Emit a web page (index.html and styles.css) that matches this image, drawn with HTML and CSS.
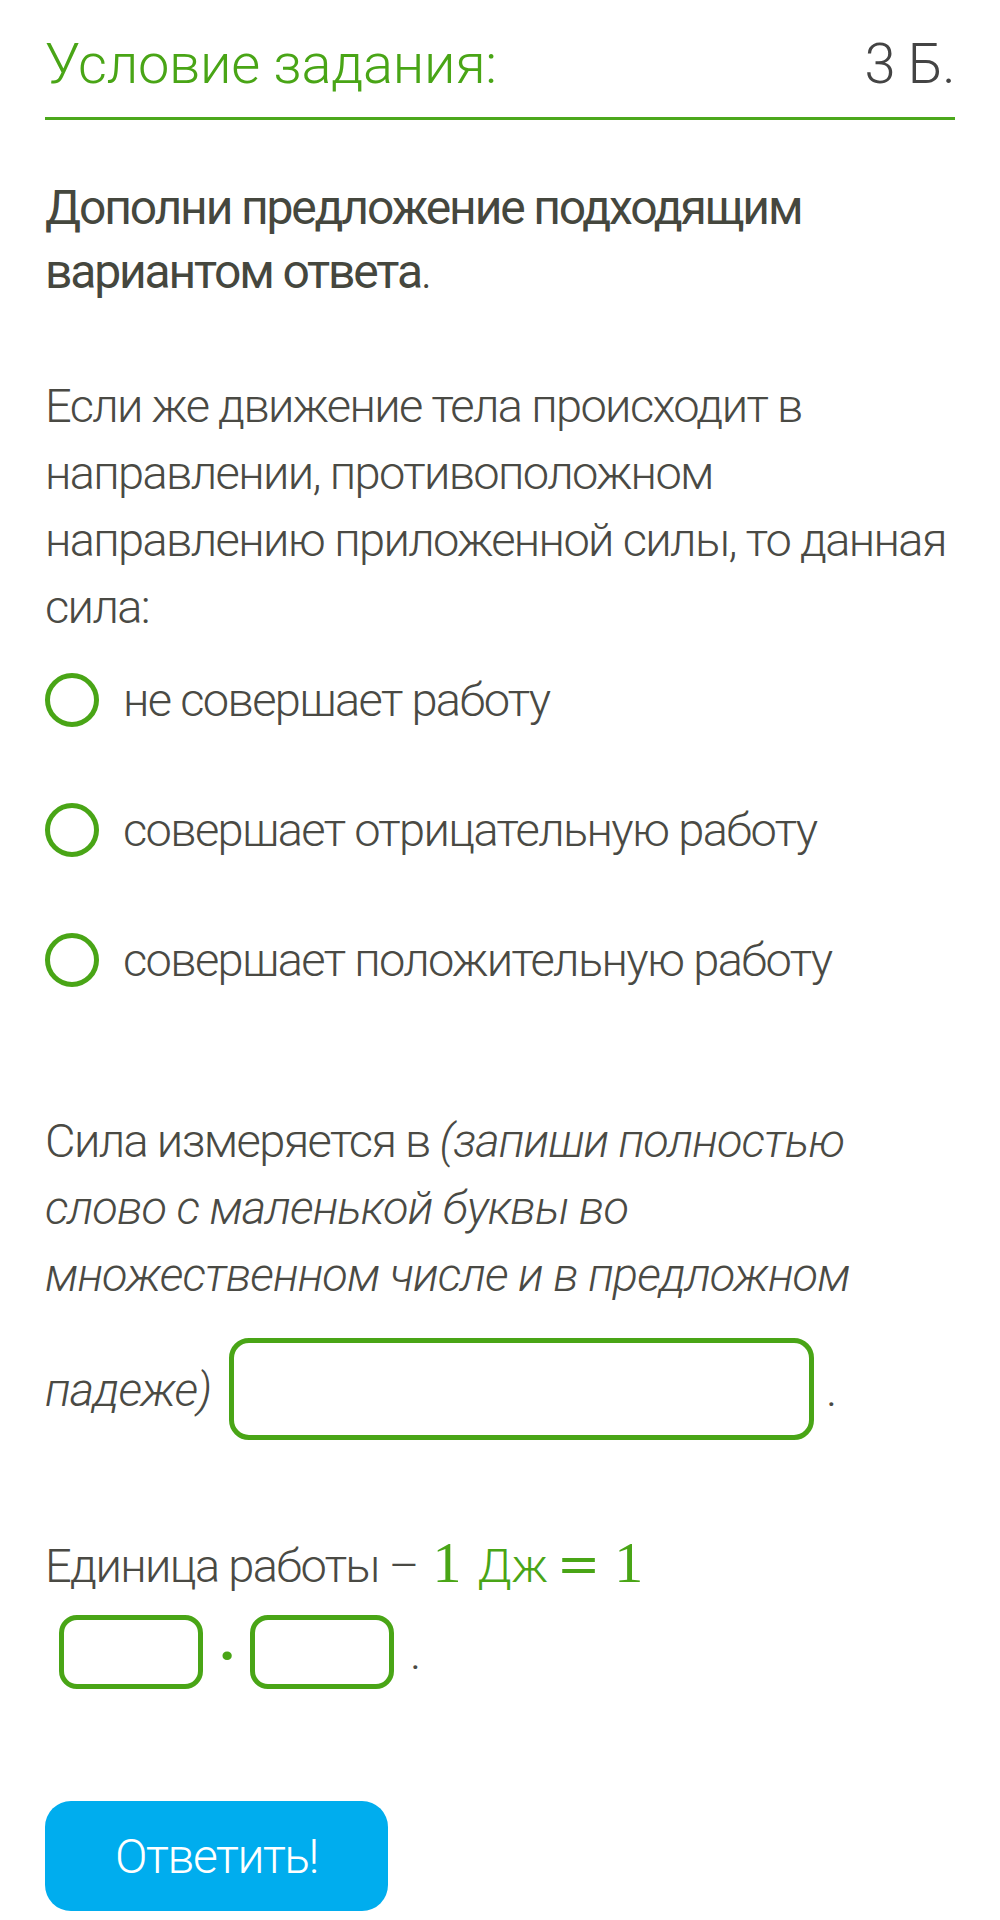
FILE: index.html
```html
<!DOCTYPE html>
<html lang="ru">
<head>
  <meta charset="UTF-8">
  <meta name="viewport" content="width=device-width, initial-scale=1.0">
  <title>Условие задания</title>
  <link rel="stylesheet" href="styles.css">
</head>
<body>
  <div class="task">
    <div class="task-head">
      <h2 class="task-title">Условие задания:</h2>
      <span class="task-points">3 Б.</span>
    </div>

    <p class="task-lead"><b>Дополни предложение подходящим вариантом ответа</b>.</p>

    <p class="task-text">Если же движение тела происходит в направлении, противоположном направлению приложенной силы, то данная сила:</p>

    <div class="options">
      <label class="option"><input type="radio" name="q1"> не совершает работу</label>
      <label class="option"><input type="radio" name="q1"> совершает отрицательную работу</label>
      <label class="option"><input type="radio" name="q1"> совершает положительную работу</label>
    </div>

    <p class="task-text measure">Сила измеряется в <i>(запиши полностью слово с маленькой буквы во множественном числе и в предложном падеже)</i> <input class="answer wide" type="text">.</p>

    <p class="task-text unit">Единица работы – <span class="math"><span class="mn">1</span><span class="mtext">Дж</span><span class="mo">=</span><span class="mn">1</span></span> <span class="boxes"><input class="answer small" type="text"><span class="mdot">·</span><input class="answer small" type="text"><span class="end">.</span></span></p>

    <button class="submit">Ответить!</button>
  </div>
</body>
</html>
```

FILE: styles.css
```css
* {
  box-sizing: border-box;
}
body {
  margin: 0;
  background: #fff;
  font-family: Roboto, "Noto Sans", sans-serif;
  font-weight: 300;
  color: #4a4a44;
}
.task {
  padding: 30px 45px 0;
}
.task-head {
  display: flex;
  justify-content: space-between;
  align-items: baseline;
  padding-bottom: 19px;
  border-bottom: 3px solid #4ca81c;
}
.task-title {
  margin: 0;
  font-size: 56px;
  line-height: 68px;
  font-weight: 300;
  letter-spacing: -0.005em;
  color: #49a516;
}
.task-points {
  font-size: 56px;
  line-height: 68px;
  letter-spacing: -0.012em;
  color: #444;
}
.task-lead {
  margin: 56px 0 0;
  font-size: 48px;
  line-height: 64px;
  letter-spacing: -0.04em;
  color: #45473e;
}
.task-lead b {
  font-weight: 400;
  letter-spacing: -0.045em;
}
.task-text {
  margin: 68px 0 0;
  font-size: 47px;
  line-height: 67px;
  letter-spacing: -0.035em;
}
.task-text i {
  letter-spacing: -0.02em;
}
.options {
  margin-top: 26px;
  display: flex;
  flex-direction: column;
  gap: 63px;
}
.option {
  display: flex;
  align-items: center;
  gap: 24px;
  font-size: 47px;
  line-height: 67px;
  letter-spacing: -0.035em;
}
.option input {
  appearance: none;
  -webkit-appearance: none;
  flex: none;
  width: 54px;
  height: 54px;
  margin: 0;
  border: 5px solid #49a516;
  border-radius: 50%;
  background: #fff;
}
.task-text.measure {
  margin-top: 114px;
}
.answer {
  appearance: none;
  -webkit-appearance: none;
  border: 5px solid #49a516;
  background: #fff;
  vertical-align: baseline;
  padding: 0;
  font: inherit;
}
.answer.wide {
  width: 585px;
  height: 102px;
  margin: 30px 12px 0 8px;
  border-radius: 20px;
}
.task-text.unit {
  margin-top: 89px;
}
.math {
  margin-left: 5px;
  color: #49a516;
  letter-spacing: 0;
}
.mn {
  font-family: "Liberation Serif", "DejaVu Serif", serif;
  font-weight: 400;
  font-size: 58px;
}
.mo {
  font-family: "DejaVu Serif", "Liberation Serif", serif;
  font-weight: 400;
  font-size: 52px;
  margin-right: 14px;
}
.mtext {
  margin: 0 9px 0 16px;
}
.boxes {
  white-space: nowrap;
}
.answer.small {
  width: 144px;
  height: 74px;
  margin: 16px 0 0 14px;
  border-radius: 18px;
}
.mdot {
  display: inline-block;
  width: 47px;
  text-align: center;
  vertical-align: -6px;
  color: #49a516;
  font-size: 58px;
  font-weight: 700;
}
.answer.small + .mdot + .answer.small {
  margin-left: 0;
}
.end {
  margin-left: 16px;
}
.submit {
  display: block;
  margin-top: 112px;
  width: 343px;
  height: 110px;
  border: none;
  border-radius: 26px;
  background: #00adee;
  color: #fff;
  font-family: Roboto, sans-serif;
  font-weight: 300;
  font-size: 48px;
  letter-spacing: -0.03em;
  cursor: pointer;
}
```
